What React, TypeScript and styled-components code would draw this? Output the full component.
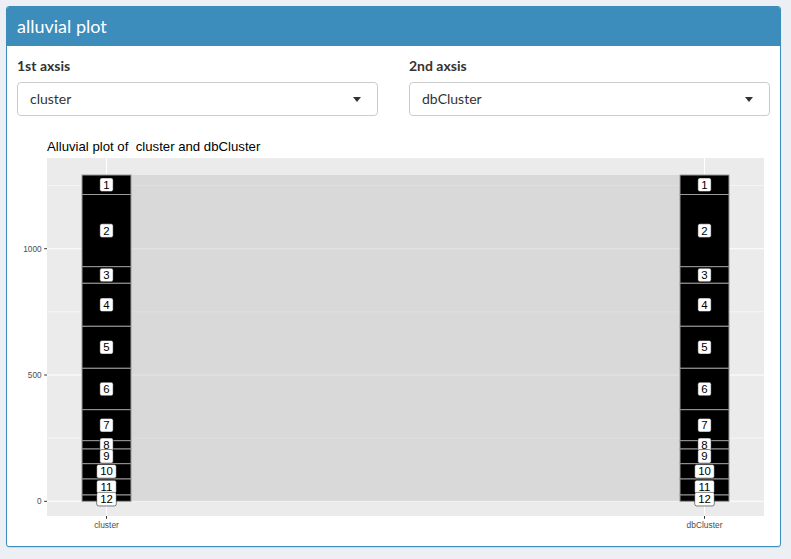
import React from "react";
import styled, { createGlobalStyle } from "styled-components";

const GlobalStyle = createGlobalStyle`
  html, body { margin: 0; padding: 0; background: #ecf0f5; }
  body { font-family: Lato, "Open Sans", sans-serif; color: #333; }
  * { box-sizing: border-box; }
`;

const Page = styled.div`
  width: 791px;
  height: 559px;
  padding: 6px 10px 12px 6px;
`;

const Box = styled.section`
  border: 1px solid #3c8dbc;
  border-radius: 3px;
  background: #fff;
  box-shadow: 0 1px 1px rgba(0, 0, 0, 0.1);
  overflow: hidden;
`;

const BoxHeader = styled.header`
  height: 39px;
  background: #3c8dbc;
  color: #fff;
  display: flex;
  align-items: center;
  padding: 0 10px 1px;
`;

const BoxTitle = styled.h3`
  margin: 0;
  font-size: 18px;
  font-weight: 400;
  line-height: 1;
`;

const BoxBody = styled.div`
  padding: 10px;
`;

const InputRow = styled.div`
  display: grid;
  grid-template-columns: 1fr 1fr;
  column-gap: 31px;
  margin-bottom: 15px;
`;

const Field = styled.div`
  display: flex;
  flex-direction: column;
`;

const Label = styled.label`
  font-size: 14px;
  font-weight: 700;
  line-height: 20px;
  margin-bottom: 6px;
  color: #333;
`;

const SelectControl = styled.div`
  height: 34px;
  border: 1px solid #ccc;
  border-radius: 4px;
  background: #fff;
  display: flex;
  align-items: center;
  justify-content: space-between;
  padding: 0 16px 0 12px;
  font-size: 14px;
  color: #333;
`;

const SelectValue = styled.span`
  line-height: 20px;
`;

const Caret = styled.span`
  width: 0;
  height: 0;
  border-left: 4.5px solid transparent;
  border-right: 4.5px solid transparent;
  border-top: 5px solid #333;
`;

const PlotSvg = styled.svg`
  display: block;
  width: 753px;
  height: 405px;
  font-family: "Liberation Sans", Arial, sans-serif;
`;

const bounds = [175, 194.5, 266.7, 283.3, 326.3, 368.3, 409.7, 440.7, 449, 463.7, 479, 495, 501.3];
const y0 = 501.3;
const pxPerUnit = (501.3 - 248.7) / 1000;
const yOf = (v: number) => y0 - v * pxPerUnit;

const Strata: React.FC<{ x: number }> = ({ x }) => {
  const w = 49;
  const cx = x + w / 2;
  return (
    <g>
      {bounds.slice(0, -1).map((top, i) => (
        <rect
          key={`r${i}`}
          x={x}
          y={top}
          width={w}
          height={bounds[i + 1] - top}
          fill="#000"
          stroke="#9a9a9a"
          strokeWidth={1}
        />
      ))}
      {bounds.slice(0, -1).map((top, i) => {
        const label = String(i + 1);
        const mid = (top + bounds[i + 1]) / 2 + (i === 11 ? 1 : 0);
        const bw = label.length * 6.3 + 7;
        return (
          <g key={`l${i}`}>
            <rect x={cx - bw / 2} y={mid - 6.8} width={bw} height={13.6} rx={2} fill="#fff" stroke="#000" strokeWidth={0.5} />
            <text x={cx} y={mid + 4.1} fontSize={11.4} textAnchor="middle" fill="#000">
              {label}
            </text>
          </g>
        );
      })}
    </g>
  );
};

const AlluvialPlot: React.FC = () => {
  const panel = { x: 47, y: 158, w: 764 - 47, h: 516 - 158 };
  const major = [0, 500, 1000];
  const minor = [250, 750, 1250];
  const xs = [106.5, 704.5];
  return (
    <PlotSvg viewBox="17 131 753 405">
      <text x={47} y={150.5} fontSize={13.2} fill="#000" style={{ whiteSpace: "pre" }}>
        {"Alluvial plot of  cluster and dbCluster"}
      </text>
      <rect x={panel.x} y={panel.y} width={panel.w} height={panel.h} fill="#ebebeb" />
      {minor.map((v) => (
        <line key={`mi${v}`} x1={panel.x} x2={panel.x + panel.w} y1={yOf(v)} y2={yOf(v)} stroke="#fff" strokeWidth={0.55} />
      ))}
      {major.map((v) => (
        <line key={`ma${v}`} x1={panel.x} x2={panel.x + panel.w} y1={yOf(v)} y2={yOf(v)} stroke="#fff" strokeWidth={1.07} />
      ))}
      {xs.map((x) => (
        <line key={`vx${x}`} x1={x} x2={x} y1={panel.y} y2={panel.y + panel.h} stroke="#fff" strokeWidth={1.07} />
      ))}
      <rect x={131} y={175} width={680 - 131} height={501.3 - 175} fill="#bdbdbd" fillOpacity={0.4} />
      <Strata x={82} />
      <Strata x={680} />
      {major.map((v) => (
        <g key={`yt${v}`}>
          <line x1={44.2} x2={47} y1={yOf(v)} y2={yOf(v)} stroke="#333" strokeWidth={1} />
          <text x={41.5} y={yOf(v) + 3} fontSize={8.2} textAnchor="end" fill="#4d4d4d">
            {v}
          </text>
        </g>
      ))}
      {[
        { x: xs[0], t: "cluster" },
        { x: xs[1], t: "dbCluster" },
      ].map(({ x, t }) => (
        <g key={t}>
          <line x1={x} x2={x} y1={516} y2={518.8} stroke="#333" strokeWidth={1} />
          <text x={x} y={528.3} fontSize={8.4} textAnchor="middle" fill="#4d4d4d">
            {t}
          </text>
        </g>
      ))}
    </PlotSvg>
  );
};

const SelectField: React.FC<{ label: string; value: string }> = ({ label, value }) => (
  <Field>
    <Label>{label}</Label>
    <SelectControl>
      <SelectValue>{value}</SelectValue>
      <Caret />
    </SelectControl>
  </Field>
);

export default function App() {
  return (
    <>
      <GlobalStyle />
      <Page>
        <Box>
          <BoxHeader>
            <BoxTitle>alluvial plot</BoxTitle>
          </BoxHeader>
          <BoxBody>
            <InputRow>
              <SelectField label="1st axsis" value="cluster" />
              <SelectField label="2nd axsis" value="dbCluster" />
            </InputRow>
            <AlluvialPlot />
          </BoxBody>
        </Box>
      </Page>
    </>
  );
}
